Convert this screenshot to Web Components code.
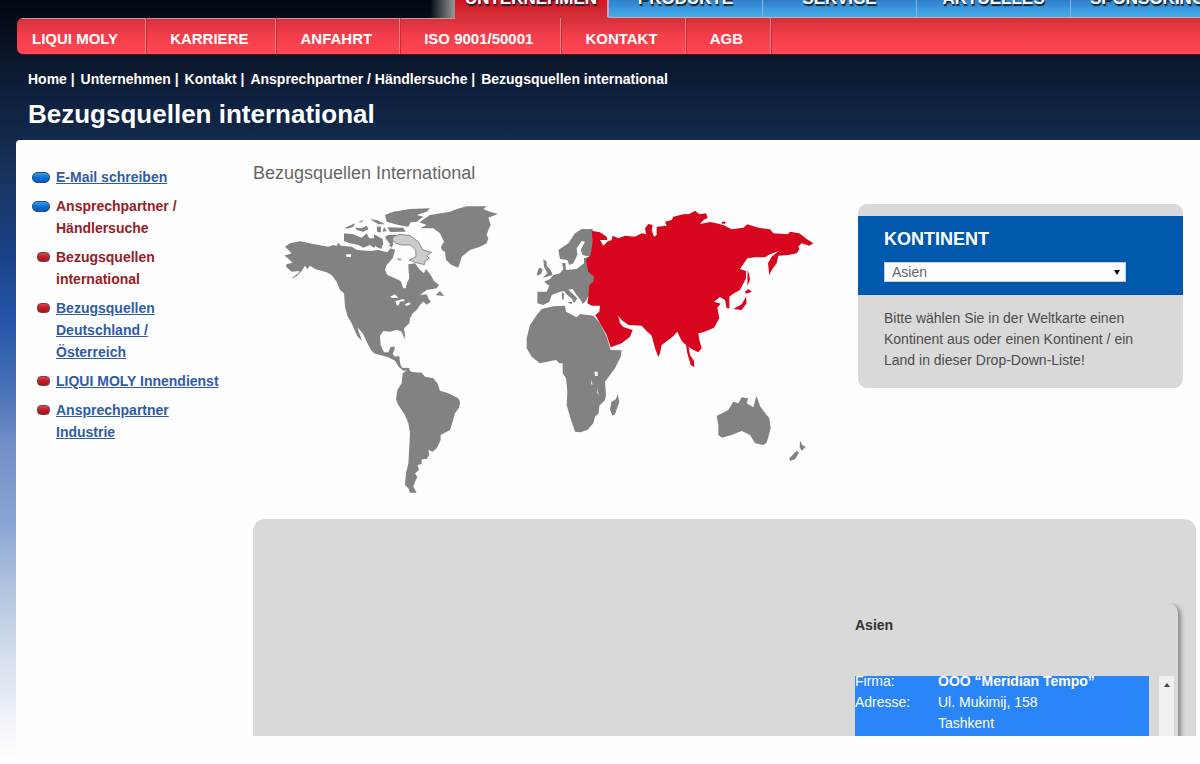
<!DOCTYPE html>
<html lang="de">
<head>
<meta charset="utf-8">
<title>Bezugsquellen international</title>
<style>
html, body { margin: 0; min-height: 100%; }
body { font-family: "Liberation Sans", Arial, sans-serif; font-size: 14px; color: #444; overflow-x: hidden; }
</style>
</head>
<body>
<lm-page></lm-page>

<template id="t-page">
<style>
:host { display: flex; flex-direction: column; min-height: 100vh; overflow: hidden;
  background: linear-gradient(#020812 0, #0a1528 54px, #0e2140 100px, #132a4c 140px, #183665 190px, #1b438a 260px, #2455a8 320px, #4a72b8 390px, #7591c8 450px, #86a4d3 520px, #b2c5df 590px, #d6e0ee 660px, #f6f8fc 735px, #fff 764px); }
main { flex: 1; margin-left: 16px; padding: 22px 4px 28px 0; background: #fefefe; border-radius: 4px 0 0 0;
  display: grid; grid-template-columns: 237px minmax(0, 1fr); align-items: start; }
.content { display: flex; flex-direction: column; }
h2 { margin: 0 0 11px; font-size: 18px; line-height: 22px; font-weight: normal; color: #666; }
.row { display: flex; justify-content: space-between; align-items: flex-start; padding: 0 13px 24px 17px; }
world-map { flex: 0 1 560px; }
continent-panel { flex: 0 0 325px; margin-top: 9px; }
</style>
<lm-header></lm-header>
<main>
  <side-nav>
    <side-item kind="main" href="#mail">E-Mail schreiben</side-item>
    <side-item kind="main" current href="#partner">Ansprechpartner / Händlersuche</side-item>
    <side-item current href="#international">Bezugsquellen international</side-item>
    <side-item href="#de-at">Bezugsquellen Deutschland / Österreich</side-item>
    <side-item wide href="#innendienst">LIQUI MOLY Innendienst</side-item>
    <side-item href="#industrie">Ansprechpartner Industrie</side-item>
  </side-nav>
  <section class="content">
    <h2>Bezugsquellen International</h2>
    <div class="row">
      <world-map></world-map>
      <continent-panel>Bitte wählen Sie in der Weltkarte einen Kontinent aus oder einen Kontinent / ein Land in dieser Drop-Down-Liste!</continent-panel>
    </div>
    <result-frame></result-frame>
  </section>
</main>
</template>

<template id="t-header">
<style>
:host { display: block; color: #fff; font-weight: bold; }
.tabs { display: flex; height: 18px; overflow: hidden; padding-left: 430px; }
.fade { flex: 0 0 25px; background: linear-gradient(90deg, transparent, #999); }
nav.sub { display: flex; margin-left: 17px; height: 36px; border-radius: 6px 0 0 6px; overflow: hidden;
  background: linear-gradient(#c9979d, #c9979d) 0 0 / 438px 1px no-repeat, linear-gradient(#d5303a, #f33f4b 50%, #ff4753);
  box-shadow: 0 1px 1px #501822; }
.crumbs { padding: 15px 28px 0; line-height: 20px; font-size: 14px; }
.crumbs a { color: inherit; text-decoration: none; }
.crumbs a + a { margin-left: 2px; }
h1 { margin: 0; padding: 10px 28px 11px; font-size: 26px; line-height: 30px; }
</style>
<nav class="tabs" aria-label="Hauptnavigation">
  <span class="fade"></span>
  <main-tab href="#u" active>UNTERNEHMEN</main-tab>
  <main-tab href="#p">PRODUKTE</main-tab>
  <main-tab href="#s">SERVICE</main-tab>
  <main-tab href="#a">AKTUELLES</main-tab>
  <main-tab href="#sp">SPONSORING</main-tab>
</nav>
<nav class="sub" aria-label="Unternehmen">
  <sub-tab href="#lm">LIQUI MOLY</sub-tab>
  <sub-tab href="#k">KARRIERE</sub-tab>
  <sub-tab href="#an">ANFAHRT</sub-tab>
  <sub-tab href="#iso">ISO 9001/50001</sub-tab>
  <sub-tab href="#ko">KONTAKT</sub-tab>
  <sub-tab href="#agb">AGB</sub-tab>
</nav>
<nav class="crumbs" aria-label="Pfad"><a href="#home">Home</a> | <a href="#u">Unternehmen</a> | <a href="#ko">Kontakt</a> | <a href="#partner">Ansprechpartner / Händlersuche</a> | <a href="#international">Bezugsquellen international</a></nav>
<h1>Bezugsquellen international</h1>
</template>

<template id="t-main-tab">
<style>
:host { flex: 0 0 154px; box-sizing: border-box; display: flex; align-items: flex-end; justify-content: center;
  padding-bottom: 8px; background: linear-gradient(#2f7fcc, #45aeea); border-right: 1px solid #8fb4dc; border-bottom: 1px solid #c9a9b4; }
:host([active]) { background: linear-gradient(#cf1620, #d5303a); border-right: 2px solid #d9a0a8; border-bottom-color: #d5303a; }
a { color: #fff; text-decoration: none; font-size: 17px; line-height: 20px; text-shadow: 1px 2px 1px #123; }
</style>
<a><slot></slot></a>
</template>

<template id="t-sub-tab">
<style>
:host { display: flex; align-items: center; padding: 6px 27px 0 24px; border-right: 1px solid #f98088; box-shadow: 1px 0 0 #c42f3a; }
:host(:first-child) { padding-left: 15px; }
a { color: #fff; text-decoration: none; font-size: 15px; line-height: 20px; white-space: nowrap; }
</style>
<a><slot></slot></a>
</template>

<template id="t-side-nav">
<style>
:host { display: block; padding: 4px 28px 0 16px; }
nav { display: flex; flex-direction: column; gap: 7px; }
</style>
<nav aria-label="Kontakt"><slot></slot></nav>
</template>

<template id="t-side-item">
<style>
:host { display: grid; grid-template-columns: 18px 1fr; column-gap: 6px; line-height: 22px; font-weight: bold; }
i { justify-self: end; margin-top: 6px; box-sizing: border-box; width: 13px; height: 10px; border-radius: 4px;
  border: 1px solid #7a4048; background: linear-gradient(#e0444c, #c01c24 50%, #a01820); }
:host([kind=main]) i { width: 18px; height: 11px; border-radius: 5px; border-color: #2a4a78; background: linear-gradient(#3a9cf0, #0a70d8 50%, #0858b8); }
a { color: #2f5ba8; text-decoration: underline; }
:host([current]) a { color: #972026; text-decoration: none; }
.w { max-width: 130px; }
:host([wide]) .w { max-width: none; white-space: nowrap; }
</style>
<i></i><span class="w"><a><slot></slot></a></span>
</template>

<template id="t-map">
<style>
:host { display: block; }
svg { display: block; width: 100%; height: auto; }
.land { fill: #828282; } .sea { fill: #fefefe; } .active { fill: #d8051f; }
.ice { fill: #ccc; stroke: #8a8a8a; stroke-width: 3; }
</style>
<svg viewBox="0 0 1680 900" role="img" aria-label="Weltkarte">
  <g class="land">
    <path d="M45 155 60 145 90 139 130 147 175 155 190 150 200 153 205 143 212 152 245 155 262 165 300 168 325 165 352 172 362 160 375 165 368 190 350 210 345 225 352 240 375 250 392 258 400 280 407 280 412 262 418 250 416 230 415 208 435 205 450 225 462 235 468 222 482 240 492 258 507 270 500 280 470 285 450 300 470 298 476 312 483 320 470 329 460 320 450 330 440 345 428 355 420 370 418 385 402 400 405 420 403 432 395 410 380 404 360 410 340 408 330 422 332 450 342 472 355 472 362 455 375 455 373 465 368 477 375 485 388 483 390 505 396 518 418 519 418 526 400 527 386 515 375 497 355 487 330 480 312 475 303 465 290 440 278 415 262 397 268 415 276 438 262 424 245 385 232 362 225 335 222 295 210 285 200 260 185 240 170 232 135 222 120 212 112 222 105 212 95 228 80 244 62 252 85 235 88 228 65 230 48 215 50 208 68 203 48 185 42 182 65 175Z"/>
    <path d="M448 82 480 60 540 50 560 42 590 34 650 34 640 42 660 50 684 57 655 68 662 90 655 105 650 120 655 130 650 145 630 155 600 165 575 185 565 218 545 210 528 195 525 170 515 165 513 155 522 140 510 115 490 100 450 100 470 90Z"/>
    <path d="M345 60 370 50 420 42 480 40 470 50 440 60 460 65 440 80 422 82 415 95 385 90 350 80ZM222 115 250 118 275 128 290 115 298 130 312 130 312 118 338 132 340 150 320 150 312 158 300 150 280 158 265 150 240 145 222 138ZM225 98 255 85 250 95 232 101ZM255 98 275 100 290 92 296 102 280 110 262 106ZM320 95 332 94 333 112 322 112ZM342 96 350 108 338 110ZM352 97 400 98 407 110 360 111ZM300 72 322 76 345 88 325 88ZM265 82 280 74 276 82ZM345 125 357 120 352 140ZM356 150 370 145 366 158ZM378 190 395 192 390 197ZM352 120 380 119 365 150 355 142ZM497 300 510 288 523 303ZM318 135 340 140 334 162 318 155Z"/>
    <path transform="translate(300 465)" d="M98 70 115 58 125 66 155 68 165 80 190 85 202 100 210 122 235 130 265 145 270 155 268 172 255 190 245 225 240 240 212 255 212 270 200 295 188 305 175 300 178 315 170 327 155 328 155 342 143 345 147 360 135 370 142 382 135 395 130 410 140 428 120 428 115 415 105 405 108 370 115 340 118 290 120 250 115 220 105 195 85 165 78 148 82 120 95 100Z"/>
    <g transform="translate(720 0)">
      <path d="M95 342 130 334 165 332 168 350 200 367 210 357 250 362 270 385 290 425 302 465 335 466 332 485 315 520 285 560 288 600 285 615 268 632 266 655 255 665 250 685 232 705 210 712 195 710 180 665 170 630 172 590 168 550 158 535 158 505 148 505 138 495 90 505 65 485 50 460 50 430 60 390 80 360Z"/>
      <path d="M323 598 328 620 315 658 308 662 300 645 304 622 318 612Z"/>
      <path d="M82 290 110 290 118 272 102 260 120 252 130 240 150 235 160 222 156 205 166 203 168 225 200 222 222 205 222 190 245 182 255 245 248 275 238 300 232 308 228 318 218 327 212 315 200 300 188 282 175 284 192 300 202 310 192 325 186 312 172 300 162 288 150 290 125 300 118 320 100 330 82 325Z"/>
      <path d="M145 165 175 145 195 115 215 102 248 102 250 182 232 184 218 180 212 165 225 140 215 138 200 160 202 180 190 205 178 210 172 195 150 192Z"/>
      <path d="M100 192 110 200 110 212 122 225 128 240 98 249 112 235 102 215ZM80 238 87 218 98 222 95 235 84 242ZM156 292 162 296 161 315 156 312ZM172 322 188 320 184 328Z"/>
    </g>
    <path transform="translate(1290 555)" d="M50 108 85 90 100 65 115 70 125 52 145 55 140 70 160 82 165 62 170 48 180 78 190 92 208 115 212 145 205 172 200 188 190 195 165 190 150 165 140 160 125 153 95 165 65 173 55 165 55 135ZM300 182 307 195 317 200 305 213 299 202ZM290 212 297 218 285 238 270 243 268 235Z"/>
  </g>
  <path class="sea" d="M228 178 244 178 242 186 229 186ZM360 305 375 298 385 308 366 309ZM376 318 400 312 405 318 390 320 385 332 380 330ZM404 328 418 322 422 327 410 333Z"/>
  <path class="sea" transform="translate(720 0)" d="M253 530 263 530 263 543 255 543ZM243 552 248 570 244 568ZM262 578 266 600 262 595Z"/>
  <path class="ice" d="M370 125 390 118 420 122 445 140 458 165 485 172 470 182 478 190 465 198 464 209 435 202 418 195 438 185 437 165 422 150 395 150 378 145 367 135Z"/>
  <g class="active" transform="translate(720 0)">
    <path d="M245 107 270 112 290 125 292 135 270 135 280 152 292 140 305 135 308 122 325 130 345 122 375 125 395 115 408 118 405 100 415 87 428 90 425 105 432 125 440 120 440 95 470 92 465 80 485 75 490 65 520 58 538 57 555 47 568 58 588 55 593 68 580 76 570 87 600 81 615 84 640 90 665 103 700 98 712 88 745 98 780 103 790 115 833 118 840 110 868 115 890 132 910 145 898 152 875 145 865 155 868 163 860 175 835 180 805 182 800 205 785 225 778 241 774 205 785 185 806 168 780 178 765 187 735 187 712 190 690 222 708 228 708 250 690 285 672 295 658 305 658 340 650 340 645 315 630 306 612 320 632 326 622 338 628 370 612 398 580 412 565 415 568 435 575 460 565 472 545 462 536 455 540 480 552 498 553 517 542 510 532 475 528 450 515 438 502 410 488 425 455 450 450 475 445 486 435 460 425 422 412 410 395 392 355 390 335 375 325 363 330 385 340 396 368 405 360 425 335 445 302 457 290 420 270 385 256 360 268 350 270 332 245 332 232 325 235 305 238 270 250 260 252 245 235 230 228 195 242 180 248 140Z"/>
    <path d="M713 225 718 240 720 255 712 272ZM705 290 715 282 726 290 708 296ZM708 305 710 325 695 345 670 342 695 328ZM635 80 648 80 645 86 636 86Z"/>
  </g>
</svg>
</template>

<template id="t-panel">
<style>
:host { display: block; background: #d9d9d9; border-radius: 9px; padding: 12px 0 17px; overflow: hidden; }
.head { background: #0059ad; padding: 12px 26px 13px; }
label { display: block; color: #fff; font-size: 18px; font-weight: bold; line-height: 22px; margin-bottom: 12px; }
.pick { display: grid; width: 242px; align-items: center; }
select, .pick::after { grid-area: 1 / 1; }
select { appearance: none; width: 100%; height: 20px; margin: 0; padding: 0 7px; border: 1px solid #c4cede; border-radius: 0;
  background: #fff; color: #666; font: 14px/18px "Liberation Sans", Arial, sans-serif; }
.pick::after { content: ""; justify-self: end; margin-right: 6px; border: 3px solid transparent; border-top: 5px solid #000; border-bottom: 0; pointer-events: none; }
p { margin: 0; padding: 13px 26px 0; line-height: 21px; color: #4c4c4c; }
</style>
<div class="head">
  <label for="k">KONTINENT</label>
  <div class="pick"><select id="k"><option>Asien</option></select></div>
</div>
<p><slot></slot></p>
</template>

<template id="t-frame">
<style>
:host { display: flex; justify-content: flex-end; align-items: flex-start; height: 217px; box-sizing: border-box; overflow: hidden;
  background: #d9d9d9; border-radius: 12px 12px 0 0; padding: 84px 18px 0 0; }
.card { width: 323px; padding: 12px 0 20px 0; border-radius: 0 10px 0 0; clip-path: inset(0 -18px 0 0); box-shadow: 3px 2px 4px #888; }
h3 { margin: 0 0 40px; font-size: 14px; line-height: 21px; color: #333; }
.scroll { display: grid; grid-template-columns: 294px 15px; column-gap: 10px; height: 160px; }
.list { overflow: hidden; background: #2a85f8; color: #fff; }
dl { margin: -5px 0 0; display: grid; grid-template-columns: 83px 1fr; line-height: 21px; }
dd { margin: 0; } b { display: block; }
.bar { background: #f0f0f0; display: flex; justify-content: center; align-items: flex-start; }
.bar::before { content: ""; margin-top: 7px; border: 3px solid transparent; border-bottom: 4px solid #444; border-top: 0; }
</style>
<div class="card">
  <h3>Asien</h3>
  <div class="scroll">
    <div class="list">
      <dl>
        <dt>Firma:</dt><dd><b>OOO “Meridian Tempo”</b></dd>
        <dt>Adresse:</dt><dd>Ul. Mukimij, 158<br>Tashkent</dd>
      </dl>
    </div>
    <div class="bar"></div>
  </div>
</div>
</template>

<script>
function register(name, templateId) {
  customElements.define(name, class extends HTMLElement {
    constructor() {
      super();
      this.attachShadow({ mode: "open" }).append(document.getElementById(templateId).content.cloneNode(true));
    }
    connectedCallback() {
      const href = this.getAttribute("href");
      if (href) this.shadowRoot.querySelector("a").href = href;
    }
  });
}
register("main-tab", "t-main-tab");
register("sub-tab", "t-sub-tab");
register("lm-header", "t-header");
register("side-item", "t-side-item");
register("side-nav", "t-side-nav");
register("world-map", "t-map");
register("continent-panel", "t-panel");
register("result-frame", "t-frame");
register("lm-page", "t-page");
</script>
</body>
</html>
